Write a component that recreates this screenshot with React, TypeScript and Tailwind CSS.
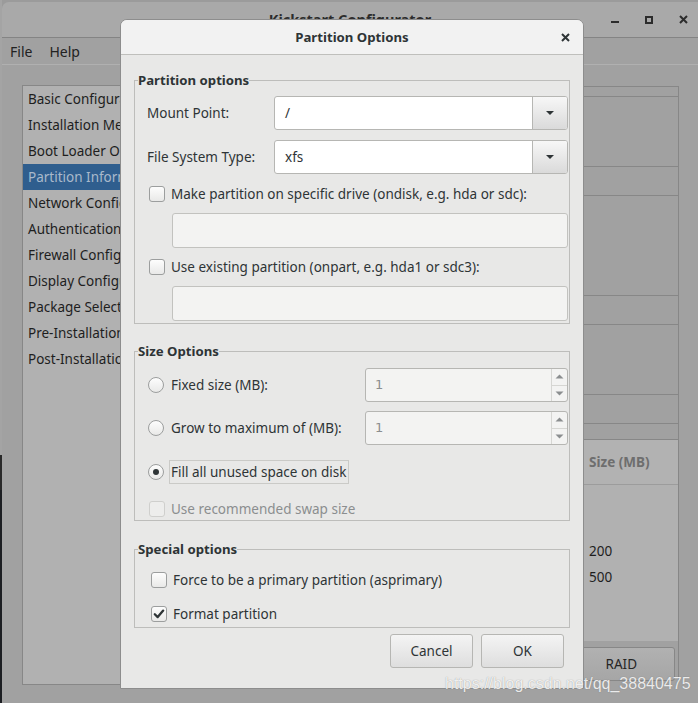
import React from "react";

function Check({ checked = false, disabled = false }: { checked?: boolean; disabled?: boolean }) {
  return (
    <span
      className={
        disabled
          ? "flex h-[16px] w-[16px] shrink-0 items-center justify-center rounded-[3px] border border-[#cfcfcd] bg-[#ededec]"
          : "flex h-[16px] w-[16px] shrink-0 items-center justify-center rounded-[3px] border border-[#9c9e9e] bg-linear-to-b from-[#fdfdfd] to-[#e9e9e8]"
      }
    >
      {checked && (
        <svg width="12" height="12" viewBox="0 0 12 12">
          <path d="M1.8 6.2 L4.7 9.1 L10.2 2.6" fill="none" stroke="#2e3436" strokeWidth="2.3" strokeLinecap="round" strokeLinejoin="round" />
        </svg>
      )}
    </span>
  );
}

function Radio({ checked = false }: { checked?: boolean }) {
  return (
    <span className="flex h-[16px] w-[16px] shrink-0 items-center justify-center rounded-full border border-[#9c9e9e] bg-linear-to-b from-[#fdfdfd] to-[#e9e9e8]">
      {checked && <span className="h-[6px] w-[6px] rounded-full bg-[#2e3436]" />}
    </span>
  );
}

function Combo({ value }: { value: string }) {
  return (
    <div className="flex h-[34px] w-[294px] overflow-hidden rounded-[3px] border border-[#b6b6b3] bg-white">
      <div className="flex flex-1 items-center pl-[10px] text-[#2e3436]">{value}</div>
      <div className="flex w-[35px] items-center justify-center border-l border-[#b6b6b3] bg-linear-to-b from-[#f7f7f7] to-[#dadada]">
        <svg width="10" height="6" viewBox="0 0 10 6">
          <path d="M1 1 H9 L5 5 Z" fill="#2e3436" />
        </svg>
      </div>
    </div>
  );
}

function Entry() {
  return <div className="ml-[25px] h-[35px] w-[396px] rounded-[3px] border border-[#c2c2bf] bg-[#f3f3f2]" />;
}

function Spin() {
  return (
    <div className="flex h-[34px] w-[203px] overflow-hidden rounded-[3px] border border-[#b6b6b3] bg-[#f3f3f2]">
      <div className="flex flex-1 items-center pl-[9px] font-['DejaVu_Sans',sans-serif] text-[13px] text-[#8b8e8f]">1</div>
      <div className="flex w-[16px] flex-col border-l border-[#d6d6d3]">
        <div className="flex flex-1 items-center justify-center border-b border-[#d6d6d3]">
          <svg width="9" height="5" viewBox="0 0 9 5">
            <path d="M0.5 4.5 H8.5 L4.5 0.5 Z" fill="#8b8e8f" />
          </svg>
        </div>
        <div className="flex flex-1 items-center justify-center">
          <svg width="9" height="5" viewBox="0 0 9 5">
            <path d="M0.5 0.5 H8.5 L4.5 4.5 Z" fill="#8b8e8f" />
          </svg>
        </div>
      </div>
    </div>
  );
}

function Frame({ title, className, children }: { title: string; className?: string; children: React.ReactNode }) {
  return (
    <fieldset className={"border border-[#bdbdbb] pl-[3px] " + (className ?? "")}>
      <legend className="text-[13.2px] leading-[20px] font-bold text-[#2e3436]">{title}</legend>
      <div className="flex flex-col pl-[9px] pr-[1px]">{children}</div>
    </fieldset>
  );
}

const listItems = [
  "Basic Configuration",
  "Installation Method",
  "Boot Loader Options",
  "Partition Information",
  "Network Configuration",
  "Authentication",
  "Firewall Configuration",
  "Display Configuration",
  "Package Selection",
  "Pre-Installation Script",
  "Post-Installation Script",
];

export default function App() {
  return (
    <div className="relative flex h-[703px] w-[698px] overflow-hidden bg-[#9b9b9b] font-['Noto_Sans',sans-serif] text-[13.5px]">
      {/* desktop strip at left */}
      <div className="flex w-[2px] flex-col">
        <div className="h-[455px] bg-[#a4a4a4]" />
        <div className="h-[35px] bg-[#2a2a2a]" />
        <div className="flex-1 bg-[#1c1e22]" />
      </div>

      {/* main window (dimmed) */}
      <div className="mt-[2px] flex flex-1 flex-col overflow-hidden rounded-tl-[7px] bg-[#a1a1a1]">
        <div className="grid h-[35px] grid-cols-[1fr_auto_1fr] items-center bg-[#a9a9a9]">
          <div />
          <div className="text-[14.5px] font-bold text-[#2c2c2c]">Kickstart Configurator</div>
          <div className="flex items-center justify-end gap-[26px] pr-[10px]">
            <svg width="8" height="8" viewBox="0 0 8 8">
              <rect x="0" y="5" width="8" height="2" fill="#2c2c2c" />
            </svg>
            <svg width="8" height="8" viewBox="0 0 8 8">
              <rect x="1" y="1" width="6" height="6" fill="none" stroke="#2c2c2c" strokeWidth="2" />
            </svg>
            <svg width="9" height="9" viewBox="0 0 9 9">
              <path d="M1 1 L8 8 M8 1 L1 8" stroke="#2c2c2c" strokeWidth="2" />
            </svg>
          </div>
        </div>
        <div className="h-px bg-[#848484]" />
        <div className="flex h-[27px] items-center gap-[17px] border-b border-[#b0b0b0] pl-[8px] text-[14px] text-[#222]">
          <span>File</span>
          <span>Help</span>
        </div>

        <div className="flex flex-1">
          {/* left list */}
          <div className="ml-[20px] mt-[20px] h-[600px] w-[220px] border border-[#878787] bg-[#b1b1b1]">
            {listItems.map((t, i) => (
              <div
                key={t}
                className={
                  i === 3
                    ? "h-[26px] whitespace-nowrap bg-[#2f5e8e] pl-[5px] leading-[27px] text-[#a9b9cb]"
                    : "h-[26px] whitespace-nowrap pl-[5px] leading-[27px] text-[#1e1e1e]"
                }
              >
                {t}
              </div>
            ))}
          </div>

          {/* right notebook content */}
          <div className="ml-auto mr-[19px] mt-[21px] flex w-[120px] flex-col">
            <div className="h-[10px] border-r border-t border-[#878787]" />
            <div className="h-[70px] border-r border-t border-[#878787]" />
            <div className="h-[29px] border-r border-t border-[#878787]" />
            <div className="h-[100px] border-r border-t border-[#878787]" />
            <div className="h-[29px] border-r border-t border-[#878787]" />
            <div className="h-[70px] border-r border-t border-[#878787]" />
            <div className="h-[29px] border-r border-t border-[#878787]" />
            <div className="h-[16px] border-r border-t border-[#878787]" />
            <div className="flex h-[202px] flex-col border-r border-t border-[#878787]">
              <div className="flex h-[45px] items-center border-b border-[#9c9c9c] bg-[#b2b2b2] pl-[30px] font-bold text-[#6e6e6e]">
                Size (MB)
              </div>
              <div className="flex flex-1 flex-col bg-[#b1b1b1] pl-[30px] pt-[53px] text-[#1e1e1e]">
                <div className="h-[26px] leading-[26px]">200</div>
                <div className="h-[26px] leading-[26px]">500</div>
              </div>
            </div>
            <div className="flex h-[41px] border-r border-[#878787] pt-[6px]">
              <div className="flex h-[34px] w-[116px] items-center justify-end rounded-[3px] border border-[#878787] bg-linear-to-b from-[#b1b1b1] to-[#a6a6a6] pr-[37px] text-[#262626]">
                RAID
              </div>
            </div>
          </div>
        </div>
      </div>

      {/* Partition Options dialog */}
      <div className="absolute left-[120px] top-[19px] flex h-[670px] w-[464px] flex-col overflow-hidden rounded-t-[7px] border border-[#8d8d8d] bg-[#e8e8e7] text-[#2e3436]">
        <div className="relative flex h-[35px] items-center justify-center border-b border-[#bfbfbc] bg-[#f2f2f2] pt-[2px]">
          <span className="text-[13.2px] font-bold">Partition Options</span>
          <svg className="absolute right-[13px] top-[13px]" width="9" height="9" viewBox="0 0 9 9">
            <path d="M1 1 L8 8 M8 1 L1 8" stroke="#2e3436" strokeWidth="2" />
          </svg>
        </div>

        <div className="flex flex-col px-[13px] pt-[15px]">
          <Frame title="Partition options">
            <div className="mt-[6px] flex h-[34px] items-center">
              <span className="w-[127px]">Mount Point:</span>
              <Combo value="/" />
            </div>
            <div className="mt-[10px] flex h-[34px] items-center">
              <span className="w-[127px]">File System Type:</span>
              <Combo value="xfs" />
            </div>
            <div className="mt-[10px] flex h-[20px] items-center gap-[6px] pl-[2px]">
              <Check />
              <span>Make partition on specific drive (ondisk, e.g. hda or sdc):</span>
            </div>
            <div className="mt-[9px]">
              <Entry />
            </div>
            <div className="mt-[9px] flex h-[20px] items-center gap-[6px] pl-[2px]">
              <Check />
              <span>Use existing partition (onpart, e.g. hda1 or sdc3):</span>
            </div>
            <div className="mb-[2px] mt-[9px]">
              <Entry />
            </div>
          </Frame>

          <Frame title="Size Options" className="mt-[17px]">
            <div className="mt-[7px] flex h-[34px] items-center">
              <div className="flex w-[218px] items-center gap-[7px] pl-px">
                <Radio />
                <span>Fixed size (MB):</span>
              </div>
              <Spin />
            </div>
            <div className="mt-[9px] flex h-[34px] items-center">
              <div className="flex w-[218px] items-center gap-[7px] pl-px">
                <Radio />
                <span>Grow to maximum of (MB):</span>
              </div>
              <Spin />
            </div>
            <div className="mt-[15px] flex h-[24px] items-center gap-[5px] pl-px">
              <Radio checked />
              <span className="flex h-[24px] items-center border border-[#cacac7] pl-px pr-[2px]">Fill all unused space on disk</span>
            </div>
            <div className="mb-px mt-[15px] flex h-[20px] items-center gap-[6px] pl-[2px] text-[#8b8e8f]">
              <Check disabled />
              <span>Use recommended swap size</span>
            </div>
          </Frame>

          <Frame title="Special options" className="mt-[18px]">
            <div className="mt-[11px] flex h-[20px] items-center gap-[6px] pl-[4px]">
              <Check />
              <span>Force to be a primary partition (asprimary)</span>
            </div>
            <div className="mb-[3px] mt-[14px] flex h-[20px] items-center gap-[6px] pl-[4px]">
              <Check checked />
              <span>Format partition</span>
            </div>
          </Frame>

          <div className="mt-[6px] flex justify-end gap-[8px] pr-[6px]">
            <button className="h-[34px] w-[83px] rounded-[3px] border border-[#b6b6b3] bg-linear-to-b from-[#f4f4f4] to-[#dedede] text-[#2e3436]">
              Cancel
            </button>
            <button className="h-[34px] w-[83px] rounded-[3px] border border-[#b6b6b3] bg-linear-to-b from-[#f4f4f4] to-[#dedede] text-[#2e3436]">
              OK
            </button>
          </div>
        </div>
      </div>

      {/* watermark */}
      <div className="pointer-events-none absolute left-[445px] top-[672px] font-['Liberation_Sans',sans-serif] text-[16px] text-white/85 [text-shadow:0_0_1px_rgba(80,80,80,0.6)]">
        https://blog.csdn.net/qq_38840475
      </div>
    </div>
  );
}
